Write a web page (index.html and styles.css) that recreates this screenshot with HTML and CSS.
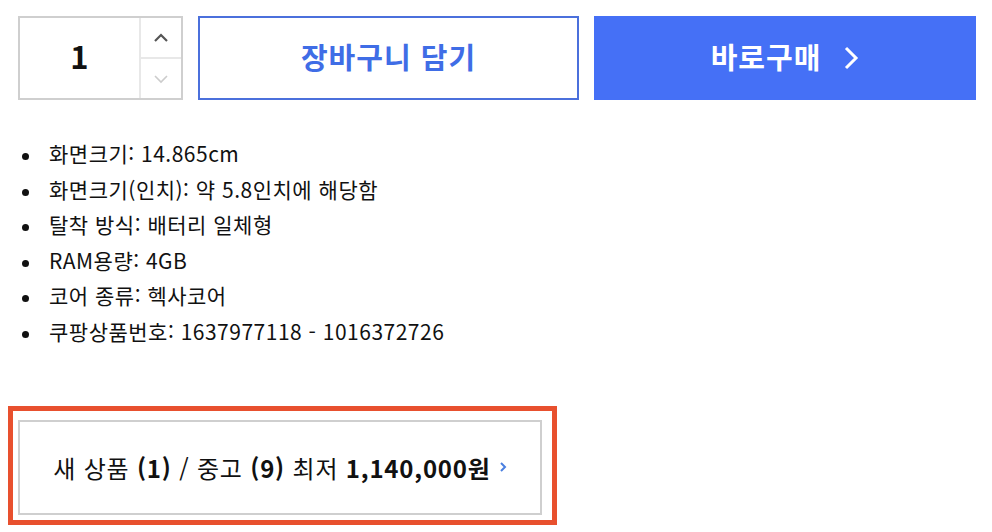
FILE: index.html
```html
<!DOCTYPE html>
<html lang="ko">
<head>
<meta charset="utf-8">
<link rel="stylesheet" href="styles.css">
</head>
<body>
<div class="buy-row">
  <div class="qty">
    <div class="qty-val">1</div>
    <div class="qty-arrows">
      <div class="qty-btn up"><svg width="16" height="10" viewBox="0 0 16 10"><path d="M2 8 L8 2 L14 8" fill="none" stroke="#555" stroke-width="2.2"/></svg></div>
      <div class="qty-btn down"><svg width="16" height="10" viewBox="0 0 16 10"><path d="M2 2 L8 8 L14 2" fill="none" stroke="#ccc" stroke-width="1.6"/></svg></div>
    </div>
  </div>
  <div class="btn-cart">장바구니 담기</div>
  <div class="btn-buy">바로구매<svg class="buy-chev" width="16" height="26" viewBox="0 0 16 26"><path d="M3 3 L13 13 L3 23" fill="none" stroke="#fff" stroke-width="3"/></svg></div>
</div>
<ul class="specs">
  <li>화면크기: 14.865cm</li>
  <li>화면크기(인치): 약 5.8인치에 해당함</li>
  <li>탈착 방식: 배터리 일체형</li>
  <li>RAM용량: 4GB</li>
  <li>코어 종류: 헥사코어</li>
  <li>쿠팡상품번호: 1637977118 - 1016372726</li>
</ul>
<div class="highlight">
  <div class="offer">
    <span>새 상품 <b>(1)</b> / 중고 <b>(9)</b> 최저 <b>1,140,000원</b></span>
    <svg class="offer-chev" width="8" height="12" viewBox="0 0 8 12"><path d="M2 2 L6 6 L2 10" fill="none" stroke="#4a7fe0" stroke-width="2"/></svg>
  </div>
</div>
</body>
</html>
```
FILE: styles.css
```css
html, body { margin: 0; padding: 0; background: #fff; }
body {
  padding: 16px 16px 0 8px;
  font-family: "Noto Sans CJK KR", "Noto Sans", sans-serif;
  color: #111;
}
.buy-row {
  display: flex;
  gap: 15px;
  height: 84px;
  margin-left: 10px;
}
.qty {
  width: 165px;
  box-sizing: border-box;
  border: 2px solid #cfcfcf;
  display: flex;
}
.qty-val {
  flex: 1;
  display: flex;
  align-items: center;
  justify-content: center;
  padding-bottom: 6px;
  font-size: 31px;
  font-weight: 700;
  color: #111;
}
.qty-arrows {
  width: 40px;
  border-left: 2px solid #e8e8e8;
  display: flex;
  flex-direction: column;
}
.qty-btn {
  flex: 1;
  display: flex;
  align-items: center;
  justify-content: center;
}
.qty-btn.down { border-top: 2px solid #e8e8e8; }
.btn-cart {
  width: 381px;
  box-sizing: border-box;
  border: 2px solid #4b70dc;
  color: #3f6de6;
  font-size: 29px;
  letter-spacing: 1px;
  font-weight: 700;
  display: flex;
  align-items: center;
  justify-content: center;
  padding-bottom: 5px;
}
.btn-buy {
  width: 382px;
  background: #4570f6;
  color: #fff;
  font-size: 29px;
  letter-spacing: 1px;
  font-weight: 700;
  display: flex;
  align-items: center;
  justify-content: center;
  gap: 22px;
  padding-bottom: 5px;
  box-sizing: border-box;
}
.buy-chev { margin-top: 5px; }
.specs {
  list-style: none;
  margin: 36px 0 0 10px;
  padding: 0 0 0 31px;
  font-size: 21px;
  letter-spacing: 0.5px;
  line-height: 35.6px;
  color: #111;
}
.specs li { position: relative; }
.specs li::before {
  content: "";
  position: absolute;
  left: -27px;
  top: 17px;
  width: 7px;
  height: 7px;
  border-radius: 50%;
  background: #111;
}
.highlight {
  margin-top: 56px;
  width: 549px;
  box-sizing: border-box;
  border: 5px solid #e8502e;
  padding: 9px 10px 5px 5px;
}
.offer {
  height: 95px;
  box-sizing: border-box;
  border: 2px solid #cfcfcf;
  display: flex;
  align-items: center;
  justify-content: center;
  gap: 8px;
  font-size: 24px;
  letter-spacing: 0.8px;
  color: #111;
}
.offer b { font-weight: 700; }
```
